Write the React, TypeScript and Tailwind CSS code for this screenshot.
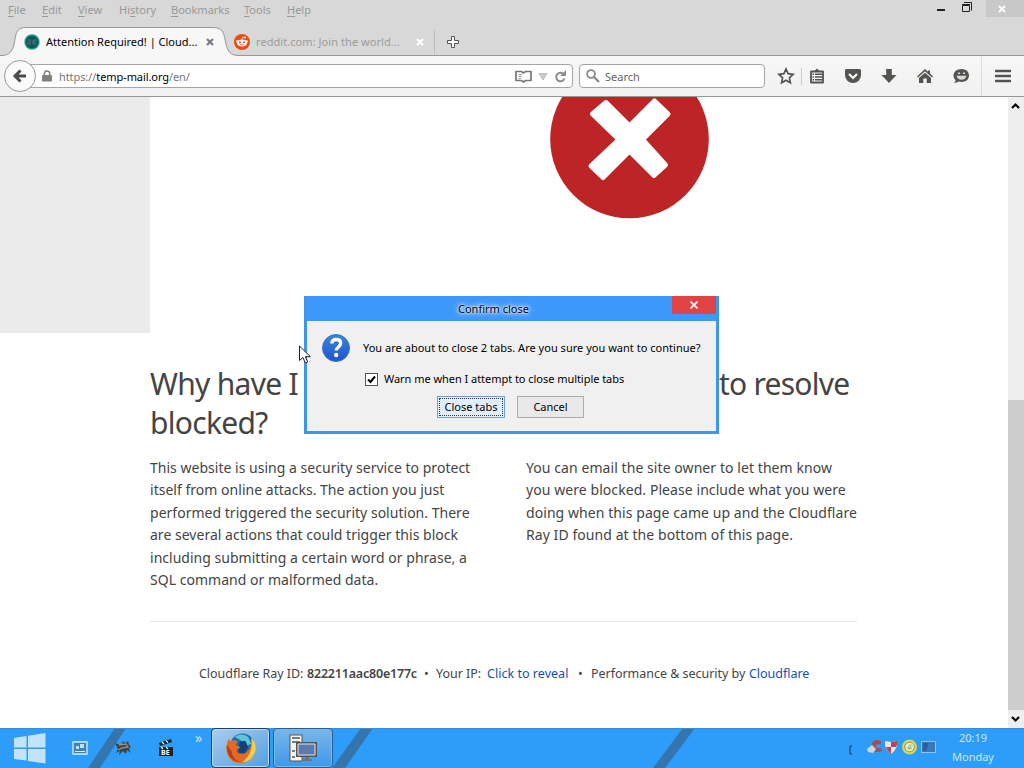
import type { ReactNode } from 'react'

const menuItems = [
  { label: 'File', key: 0, width: 'w-[34px]' },
  { label: 'Edit', key: 0, width: 'w-9' },
  { label: 'View', key: 0, width: 'w-[41px]' },
  { label: 'History', key: 2, width: 'w-[52px]' },
  { label: 'Bookmarks', key: 0, width: 'w-[73px]' },
  { label: 'Tools', key: 0, width: 'w-[43px]' },
  { label: 'Help', key: 0, width: 'w-10' },
]

function MenuBar() {
  return (
    <div className="flex h-5 items-start justify-between">
      <div className="flex pl-2 pt-0.5 text-[11px] leading-4 text-[#999]">
        {menuItems.map(({ label, key, width }) => (
          <span key={label} className={`${width} shrink-0 whitespace-nowrap`}>
            {label.slice(0, key)}
            <span className="underline underline-offset-2">{label[key]}</span>
            {label.slice(key + 1)}
          </span>
        ))}
      </div>
      <div className="flex items-start">
        <svg className="mr-[11px] mt-[1px] h-3.5 w-[38px]" viewBox="0 0 38 14">
          <path d="M0 8h8v2H0z" fill="#222" />
          <path d="M25.500 4.500h7v6h-7z" fill="none" stroke="#222" />
          <path d="M25 3.500h8M27 1.500h7.500v8" fill="none" stroke="#222" />
        </svg>
        <div className="flex h-[17px] w-[38px] items-center bg-[#c8c8c8] pl-3">
          <svg className="h-2 w-2" viewBox="0 0 8 8">
            <path d="M1 1l6 6M7 1L1 7" stroke="#fff" strokeWidth="2" />
          </svg>
        </div>
      </div>
    </div>
  )
}

function TabBar() {
  return (
    <div className="relative flex h-9 items-center border-b border-[#989898] pt-[5px]">
      {/* Curved outline of the selected tab */}
      <svg className="absolute -bottom-px left-0 h-[29px] w-[240px]" viewBox="0 0 240 29">
        <path
          d="M0 29V28.500H2C9 28 12 25 14 18C16 8 15 1 26 .5H213C224 1 224 8 226 17C228 25 230 28 238 28.500H240V29Z"
          fill="#f7f7f7"
        />
        <path
          d="M0 28.500H2C9 28 12 25 14 18C16 8 15 .5 26 .5H213C224 .5 224 8 226 17C228 25 230 28 238 28.500H240"
          fill="none"
          stroke="#989898"
        />
      </svg>
      <div className="relative mt-1 flex w-[234px] items-center pl-6">
        <svg className="h-4 w-4" viewBox="0 0 16 16">
          <circle cx="8" cy="8" r="7.700" fill="#16a08c" />
          <circle cx="8" cy="8" r="6.300" fill="#214f59" />
          <path d="M3 6h4M4 8h3M3 10h4M9 6h4M9 8h3M9 10h3M9 6v4" stroke="#2d8583" fill="none" />
        </svg>
        <span className="ml-1.5 w-[160px] whitespace-nowrap text-[11px] leading-4 text-black">
          Attention Required! | Cloud...
        </span>
        <svg className="h-2 w-2" viewBox="0 0 8 8">
          <path d="M1 1l6 6M7 1L1 7" stroke="#777b82" strokeWidth="2.200" />
        </svg>
      </div>
      <div className="relative mt-1 flex w-[200px] items-center">
        <svg className="h-4 w-4" viewBox="0 0 16 16">
          <circle cx="8" cy="8" r="8" fill="#f04a12" />
          <circle cx="12.500" cy="7.500" r="1.300" fill="#fff" />
          <circle cx="3.500" cy="7.500" r="1.300" fill="#fff" />
          <circle cx="11" cy="3.500" r="1" fill="#fff" />
          <path d="M8 6l.6-2.700L11 3.500" stroke="#fff" strokeWidth=".7" fill="none" />
          <ellipse cx="8" cy="9" rx="5" ry="3.600" fill="#fff" />
          <circle cx="6" cy="8.300" r="1" fill="#f04a12" />
          <circle cx="10" cy="8.300" r="1" fill="#f04a12" />
          <path d="M6 10.500q2 1.200 4 0" stroke="#f04a12" strokeWidth=".8" fill="none" />
        </svg>
        <span className="ml-1.5 w-[160px] whitespace-nowrap text-[11px] leading-4 tracking-[0.06px] text-[#9c9c9c]">
          reddit.com: Join the world...
        </span>
        <svg className="h-2 w-2" viewBox="0 0 8 8">
          <path d="M1 1l6 6M7 1L1 7" stroke="#fff" strokeWidth="2.200" />
        </svg>
      </div>
      <div className="relative mt-1 h-6 w-px bg-[#bdbdbd]" />
      <svg className="relative ml-3 mt-1 h-3 w-3" viewBox="0 0 12 12">
        <path d="M4.500.5h3v4h4v3h-4v4h-3v-4h-4v-3h4z" fill="#fff" stroke="#555" />
      </svg>
    </div>
  )
}

function ToolButton({ children, className = '' }: { children: ReactNode; className?: string }) {
  return (
    <svg className={`h-[18px] w-[18px] shrink-0 ${className}`} viewBox="0 0 18 18" fill="#55534f">
      {children}
    </svg>
  )
}

function Toolbar() {
  return (
    <div className="flex h-[41px] items-center border-b border-[#989898] bg-gradient-to-b from-[#f7f7f7] to-[#f1f1f1]">
      <div className="z-10 ml-1 flex h-8 w-8 shrink-0 items-center justify-center rounded-full border border-[#9a9a9a] bg-[#fbfbfb]">
        <svg className="h-4 w-4" viewBox="0 0 16 16">
          <path d="M8.500 2.500L3 8l5.500 5.500M3 8h11" stroke="#4b4a48" strokeWidth="3" fill="none" />
        </svg>
      </div>
      <div className="-ml-2 flex h-6 w-[545px] items-center rounded-r-sm border border-[#a5a5a5] bg-white pl-[13px]">
        <svg className="h-3 w-2.5 shrink-0" viewBox="0 0 11 12">
          <path d="M2.500 6V3.500a3 3 0 0 1 6 0V6" stroke="#808080" strokeWidth="1.700" fill="none" />
          <rect y="5" width="11" height="7" rx="1" fill="#808080" />
        </svg>
        <span className="ml-[7px] mt-px whitespace-nowrap text-[11px] leading-4 tracking-[-0.08px] text-[#777]">
          https://<span className="text-black">temp-mail.org</span>/en/
        </span>
        <svg className="ml-auto mr-[5px] h-[13px] w-[52px]" viewBox="0 0 52 13">
          <path d="M1 1.500h5.500l2 1.500 2-1.500H16v9h-5.500l-2 1.500-2-1.500H1z" fill="none" stroke="#777" strokeWidth="1.700" />
          <path d="M3.500 4.500H7M3.500 6.500H7M3.500 8.500H6" stroke="#999" />
          <path d="M24 3.500h8L28 10z" fill="#ccc" stroke="#bbb" />
          <path d="M49 4.500A4.300 4.300 0 1 0 49.500 8.500" fill="none" stroke="#8c8c8c" strokeWidth="2" />
          <path d="M51 0v6h-6z" fill="#8c8c8c" />
        </svg>
      </div>
      <div className="ml-1.5 flex h-6 w-[186px] shrink-0 items-center rounded-sm border border-[#a5a5a5] bg-white pl-1.5">
        <svg className="h-3.5 w-3.5" viewBox="0 0 14 14">
          <circle cx="5" cy="5" r="3.900" fill="none" stroke="#888" strokeWidth="1.800" />
          <path d="M8 8l5 5" stroke="#888" strokeWidth="2.300" />
        </svg>
        <span className="ml-[5px] mt-px text-[11px] leading-4 text-[#666]">Search</span>
      </div>
      <ToolButton className="ml-3">
        <path d="M9 2l2.100 4.700 5 .6-3.700 3.500 1 5L9 13.300l-4.400 2.500 1-5L1.900 7.300l5-.6z" fill="none" stroke="#55534f" strokeWidth="1.700" />
      </ToolButton>
      <div className="ml-[6px] h-[17px] w-px bg-[#ccc]" />
      <ToolButton className="ml-[6px]">
        <path d="M3 4.500h12v11H3z" fill="#f5f5f5" stroke="#55534f" strokeWidth="1.800" strokeLinejoin="round" />
        <path d="M6 4.500L9 1.500l3 3zM4.500 6.500H6V8H4.500zM4.500 9.300H6v1.500H4.500zM4.500 12H6v1.500H4.500zM7 6.500h7.500V8H7zM7 9.300h7.500v1.500H7zM7 12h7.500v1.500H7z" />
      </ToolButton>
      <ToolButton className="ml-[18px]">
        <path d="M2.500 2h13Q17 2 17 3.500V8a8 8 0 0 1-16 0V3.500Q1 2 2.500 2z" />
        <path d="M5 7l4 4 4-4" stroke="#fff" strokeWidth="2" fill="none" />
      </ToolButton>
      <ToolButton className="ml-[18px]">
        <path d="M6.200 2h5.600v6h4.700L9 16 1.500 8h4.700z" />
      </ToolButton>
      <ToolButton className="ml-[18px]">
        <path d="M9 2l3 2.700V3.500h2v3L17 9.500l-1 1L9 4.300 2 10.500l-1-1zM9 5.700L15 11v5h-4.300v-4.500H7.300V16H3v-5z" />
      </ToolButton>
      <ToolButton className="ml-[18px]">
        <path d="M9.500 2C14 2 17 4.800 17 8.500S14 15 9.500 15c-1 0-2-.2-2.800-.4-1.700 1.200-3.200 1.300-4.700 1.300 1-.8 1.400-1.700 1.600-2.700C2.200 12 1.500 10.400 1.500 8.500 1.500 4.800 5 2 9.500 2z" />
        <path d="M6 5.500h2V7H6zM11 5.500h2V7h-2zM4.500 8.800h10q-1 4-5 4t-5-4z" fill="#d8d8d6" />
      </ToolButton>
      <div className="ml-[11px] h-10 w-px bg-[#dcdcdc]" />
      <svg className="ml-[13px] h-3.5 w-4 shrink-0" viewBox="0 0 16 14">
        <path d="M1 2h14M1 7h14M1 12h14" stroke="#55534f" strokeWidth="2.600" strokeLinecap="round" />
      </svg>
    </div>
  )
}

function BlockedPage() {
  return (
    <main className="w-[1008px] shrink-0 overflow-hidden bg-white text-[#444]">
      <div className="flex h-[236px]">
        <div className="w-[150px] bg-[#ebebeb]" />
        <svg className="ml-[400px] h-[122px] w-40" viewBox="0 0 160 122">
          <circle cx="79.500" cy="42" r="79.300" fill="#bd2426" />
          <path
            d="M56 5.500L79.500 29 104.500 4 118 17 92.500 42.500 115.500 68 104 78.500 79.500 54 53 80.500 41 69 69 42.500 42.500 17z"
            fill="#fff"
            stroke="#fff"
            strokeWidth="5"
            strokeLinejoin="round"
          />
        </svg>
      </div>
      <div className="mt-8 flex h-[256px] pl-[150px]">
        <section className="w-[376px]">
          <h2 className="h-[92px] whitespace-nowrap text-[30px] leading-[38.500px] tracking-[-0.7px]">
            Why have I
            <br />
            blocked?
          </h2>
          <p className="whitespace-nowrap text-[14px] leading-[22.400px] tracking-[0.02px]">
            This website is using a security service to protect
            <br />
            itself from online attacks. The action you just
            <br />
            performed triggered the security solution. There
            <br />
            are several actions that could trigger this block
            <br />
            including submitting a certain word or phrase, a
            <br />
            SQL command or malformed data.
          </p>
        </section>
        <section>
          <h2 className="h-[92px] whitespace-nowrap pl-[193px] text-[30px] leading-[38.500px] tracking-[-0.75px]">
            to resolve
          </h2>
          <p className="whitespace-nowrap text-[14px] leading-[22.400px] tracking-[0.07px]">
            You can email the site owner to let them know
            <br />
            you were blocked. Please include what you were
            <br />
            doing when this page came up and the Cloudflare
            <br />
            Ray ID found at the bottom of this page.
          </p>
        </section>
      </div>
      <footer className="ml-[150px] flex w-[707px] whitespace-nowrap border-t border-[#e6e6e6] pl-[49px] pt-[42px] text-[12.500px] leading-5 tracking-[-0.03px]">
        <span className="w-[108px]">Cloudflare Ray ID:</span>
        <strong className="w-[117px] font-semibold tracking-[-0.2px]">822211aac80e177c</strong>
        <span className="w-3">•</span>
        <span className="w-[51px]">Your IP:</span>
        <span className="w-[91px] tracking-[0.03px] text-[#1550b0]">Click to reveal</span>
        <span className="w-[13px]">•</span>
        <span className="w-[158px]">Performance &amp; security by</span>
        <span className="text-[#1550b0]">Cloudflare</span>
      </footer>
    </main>
  )
}

function ScrollBar() {
  return (
    <div className="flex w-4 flex-col items-center bg-[#eeeeee]">
      <svg className="mt-[3px] h-3 w-4" viewBox="0 0 16 12">
        <path d="M4 8l3.500-3.500L11 8" fill="none" stroke="#000" strokeWidth="2.200" />
      </svg>
      <div className="mt-[288px] h-[310px] w-4 bg-[#cdcdcd]" />
      <svg className="mt-[3px] h-3 w-4" viewBox="0 0 16 12">
        <path d="M4 4l3.500 3.500L11 4" fill="none" stroke="#000" strokeWidth="2.200" />
      </svg>
    </div>
  )
}

function ConfirmDialog() {
  return (
    <div className="absolute left-[304px] top-[296px] flex h-[138px] w-[415px] flex-col border-[3px] border-t-0 border-[#3f95e8] bg-[#f0f0f0] text-[11px] text-black">
      <div className="flex h-[25px] shrink-0 items-start bg-[#3e98fb]">
        <span className="ml-[151px] mt-[5px] w-[214px] leading-4 [text-shadow:0_0_2px_#fff,0_0_4px_#fff,0_0_6px_#fff]">Confirm close</span>
        <div className="flex h-[18px] w-11 items-center justify-center bg-[#e04343]">
          <svg className="h-2 w-2" viewBox="0 0 8 8">
            <path d="M.5.5l7 7M7.500.5l-7 7" stroke="#fff" strokeWidth="1.600" />
          </svg>
        </div>
      </div>
      <div className="flex items-center pl-[15px] pt-[13px]">
        <svg className="h-7 w-7" viewBox="0 0 28 28">
          <defs>
            <linearGradient id="help" x1="0" y1="0" x2="0" y2="1">
              <stop offset="0" stopColor="#3b86d8" />
              <stop offset="1" stopColor="#1d54cf" />
            </linearGradient>
          </defs>
          <circle cx="14" cy="14" r="13.500" fill="url(#help)" stroke="#3c74b8" />
          <path d="M9.800 9.500C10 6.800 11.500 5.500 14.200 5.500c2.800 0 4.500 1.500 4.500 3.800 0 3.600-4.500 3.700-4.500 7.200" fill="none" stroke="#fff" strokeWidth="3.300" />
          <circle cx="14.200" cy="21" r="2.200" fill="#fff" />
        </svg>
        <span className="ml-[13px] whitespace-nowrap leading-4 tracking-[0.02px]">
          You are about to close 2 tabs. Are you sure you want to continue?
        </span>
      </div>
      <div className="flex items-center pl-[58px] pt-[9px]">
        <span className="flex h-[13px] w-[13px] items-center justify-center border border-[#555] bg-white">
          <svg className="h-[9px] w-[9px]" viewBox="0 0 9 9">
            <path d="M1 4.500L3.500 7 8 1.500" fill="none" stroke="#000" strokeWidth="2" />
          </svg>
        </span>
        <span className="ml-1.5 whitespace-nowrap leading-4 tracking-[-0.04px]">Warn me when I attempt to close multiple tabs</span>
      </div>
      <div className="flex gap-3 pl-[130px] pt-[9px]">
        <button className="h-[22px] w-[68px] border border-[#6aa3d8] bg-[#e0effc] p-px">
          <span className="flex h-full items-center justify-center whitespace-nowrap border border-dotted border-[#335]">
            Close tabs
          </span>
        </button>
        <button className="h-[22px] w-[67px] border border-[#adadad] bg-[#e9e9e9]">Cancel</button>
      </div>
    </div>
  )
}

function FirefoxIcon() {
  return (
    <svg className="h-[31px] w-[31px]" viewBox="0 0 32 32">
      <circle cx="18" cy="13" r="12.500" fill="#1f6ea8" />
      <path d="M10 4q7-5 14 0l3 7-6 3-4-6z" fill="#5cc4dc" />
      <path d="M15 9l6-1 3 7-4 6-6-1z" fill="#153f78" />
      <path d="M27 5c5 6 6 14 1 20-6 8-18 8-23 1C0 20 1 11 4 6l2 3c2-2 5-2 7 0l-2 3 5 3-4 2c0 5 6 6 10 3 5-4 6-9 5-15z" fill="#e8691e" />
      <path d="M27 5c6 6 6 14 1 20-3 4-7 5-10 5 8-6 11-15 9-25z" fill="#f9cf45" />
      <path d="M2 12c-1 9 4 17 13 18-5-3-8-6-8-11z" fill="#c23b15" />
    </svg>
  )
}

function TaskBar() {
  return (
    <footer className="relative flex h-10 shrink-0 bg-[#2e9dfa] text-[11px] text-[#c9e8fc]">
      {/* Wallpaper showing through the bar */}
      <svg className="absolute inset-0 h-10 w-[1024px]" viewBox="0 0 1024 40">
        <path d="M115 0h11L100 40H88zM361 0h12L345 40H332zM683 0h12L665 40H653z" fill="#3475ad" />
        <path d="M0 .5h1024" stroke="#3e8bd0" />
      </svg>
      <svg className="relative ml-3.5 mt-[5px] h-[31px] w-8" viewBox="0 0 32 31">
        <path d="M0 5l12.500-2v11.500H0zM14 2.700L31.500 0v14.500H14zM0 16h12.500v11.500L0 26zM14 16h17.500v14.500L14 28z" fill="#c2e4fb" />
      </svg>
      <svg className="relative ml-[26px] mt-[13px] h-3.5 w-4" viewBox="0 0 16 14">
        <path d="M1 1h14v12H1z" fill="#3c83bd" stroke="#d8eefa" strokeWidth="1.300" />
        <path d="M3 10.500h10" stroke="#d8eefa" />
        <path d="M8 3h4v4H8zM4 5h3v3H4z" fill="#bde0f3" />
      </svg>
      <svg className="relative ml-[27px] mt-3 h-4 w-4" viewBox="0 0 16 16">
        <path d="M0 3l5 2 3-2-1-2 4 2 2-2 1 4 2 2-2 2 2 4-4-3-1 4-3-3-4 4 1-4-4 2 2-4z" fill="#36434a" />
        <path d="M4 5l7-1 2 3-6 1-4 2" stroke="#a58d75" strokeWidth="1.300" fill="none" />
      </svg>
      <svg className="relative ml-[27px] mt-[11px] h-[17px] w-4" viewBox="0 0 16 17">
        <path d="M1 4l12-4 1 3L2 7zM1 8h14v9H1z" fill="#14232f" />
        <path d="M4 3l2 2M8 1.600l2 2M3 8l2 2M8 8l2 2" stroke="#fff" strokeWidth="1.200" />
        <text x="3" y="16" className="fill-white text-[7px] font-bold">BE</text>
      </svg>
      <span className="relative ml-[21px] mt-px w-4 text-[14px] leading-[18px]">»</span>
      <div className="relative flex h-10 w-[59px] items-center justify-center rounded-sm border border-[#183f66] bg-gradient-to-br from-[#a9cdec] to-[#539edf] shadow-[inset_0_0_0_1px_#b9daf3]">
        <FirefoxIcon />
      </div>
      <div className="relative ml-[3px] flex h-10 w-[60px] items-center justify-center rounded-sm border border-[#285d8f] bg-gradient-to-b from-[#78b5e8] to-[#3d99ea] pr-px shadow-[inset_0_0_0_1px_#79bbed]">
        <svg className="h-7 w-7" viewBox="0 0 28 28">
          <path d="M1 1h12v26H1z" fill="#f4f4f2" stroke="#58544f" />
          <path d="M3 4h8M3 8h8M3 17h3M3 23h3" stroke="#58544f" strokeWidth="1.500" />
          <path d="M8 9h19v13H8z" fill="#5b7ab0" stroke="#58544f" strokeWidth="2" />
          <path d="M9 10h17v11H9z" fill="none" stroke="#e3e6e4" />
          <path d="M16 23h4v2h3v2H13v-2h3z" fill="#77736b" />
        </svg>
      </div>
      <svg className="relative ml-auto mt-[17px] h-2.5 w-1" viewBox="0 0 4 10">
        <path d="M3 1H1v8h2" fill="none" stroke="#13395c" />
      </svg>
      <svg className="relative ml-[14px] mt-[11px] h-4 w-[70px]" viewBox="0 0 70 16">
        <path d="M14 2Q8-1 5 4q-2 4 2 8 4 2 8 0l-1-3q-3 1-5-1-1-3 5-3z" fill="#ad4b50" />
        <path d="M0 10l5-4 4 4-3 4-5-1z" fill="#c7d7dc" />
        <path d="M18 2l6 1 6-1q1 8-6 13-7-5-6-13z" fill="#ece7e6" />
        <path d="M24 3l6-1q1 3-1 6h-5zM19 8h5v7q-4-3-5-7z" fill="#b9474f" />
        <circle cx="42.500" cy="8" r="7.500" fill="#d6d558" />
        <circle cx="42.500" cy="8" r="4.800" fill="#ece9a9" stroke="#8c9360" />
        <path d="M40 7h5v4h-5zM40 7l2-2h4v4" fill="#b0bd77" stroke="#fff" strokeWidth=".7" />
        <path d="M54.500 2.500h14v11h-14z" fill="#3978bc" stroke="#8fc6e8" />
        <path d="M56 4h6l-3 8h-3z" fill="#316099" />
      </svg>
      <div className="relative ml-[13px] mr-[28px] flex w-[46px] flex-col items-center">
        <span className="mt-0.5 leading-4">20:19</span>
        <span className="mt-[3px] leading-4">Monday</span>
      </div>
    </footer>
  )
}

export default function App() {
  return (
    <div className="relative flex h-[768px] w-[1024px] flex-col overflow-hidden bg-[#d8d8d8] font-['Noto_Sans',sans-serif]">
      <MenuBar />
      <TabBar />
      <Toolbar />
      <div className="flex h-[631px] shrink-0">
        <BlockedPage />
        <ScrollBar />
      </div>
      <TaskBar />
      <ConfirmDialog />
      {/* Mouse pointer */}
      <svg className="absolute left-[299px] top-[345px] h-[19px] w-3" viewBox="0 0 12 19">
        <path d="M.5 1v14.500l3.500-3 2.300 5.500 2.400-1-2.300-5.300h5z" fill="#fff" stroke="#222" />
      </svg>
    </div>
  )
}
